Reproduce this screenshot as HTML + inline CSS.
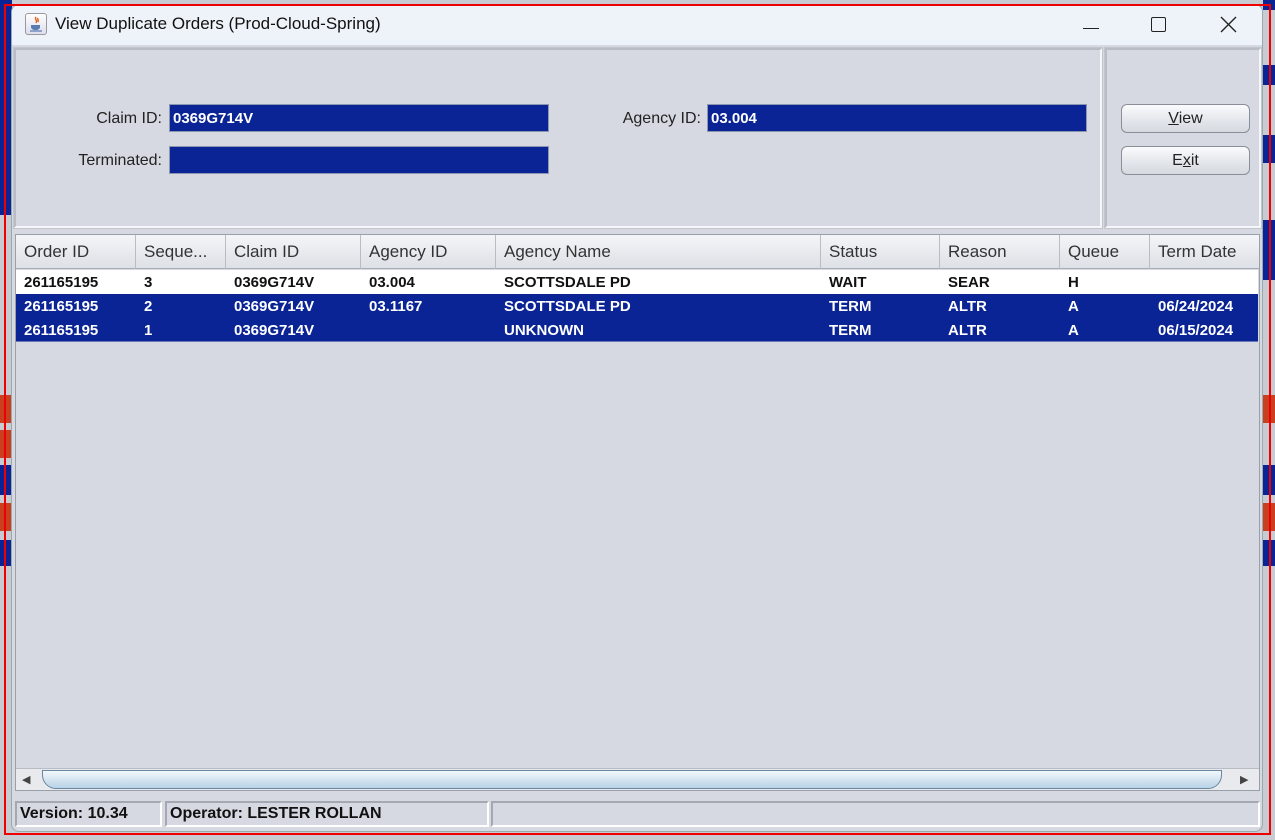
<!DOCTYPE html>
<html><head><style>
*{box-sizing:border-box;margin:0;padding:0}
body{width:1275px;height:840px;position:relative;background:#c8cbd2;font-family:"Liberation Sans",sans-serif;overflow:hidden}
.a{position:absolute}
.win{left:11px;top:4px;width:1252px;height:828px;background:#d6d9e1;border-radius:8px;overflow:hidden;border:1px solid #9aa}
.title{left:0;top:0;width:100%;height:40px;background:#eef3f9}
.panel{border:2px solid #b8bcc4;border-right-color:#f4f6fa;border-bottom-color:#f4f6fa;outline:1px solid #c2c5cc}
.lbl{font-size:16px;color:#222;text-align:right}
.fld{background:#0a2496;border:1px solid #8d96b0;color:#fff;font-weight:bold;font-size:15px;padding:5px 3px}
.btn{background:linear-gradient(#fafbfd,#e2e5ea 60%,#d6d9df);border:1px solid #8a8e96;border-radius:6px;font-size:16px;text-align:center;line-height:27px;color:#222}
.hdr{background:linear-gradient(#f4f5f8,#dde0e6);height:34px;border-bottom:1px solid #a8acb4}
.hc{position:absolute;top:0;height:34px;line-height:34px;font-size:17px;color:#333;padding-left:8px;border-right:1px solid #b8bcc4;white-space:nowrap}
.row{position:absolute;left:0;width:1242px;height:24px;font-size:15px;font-weight:bold}
.c{position:absolute;top:0;line-height:25px;padding-left:8px;white-space:nowrap}
.st{font-size:16px;font-weight:bold;color:#111;border:2px solid #a4a8b0;border-right-color:#fff;border-bottom-color:#fff;line-height:22px;padding-left:3px}
</style></head><body>
<div class="a" style="left:0;top:0;width:12px;height:215px;background:#0a2496"></div>
<div class="a" style="left:0;top:395px;width:12px;height:28px;background:#c8401f"></div>
<div class="a" style="left:0;top:430px;width:12px;height:28px;background:#c8401f"></div>
<div class="a" style="left:0;top:465px;width:12px;height:30px;background:#0a2496"></div>
<div class="a" style="left:0;top:503px;width:12px;height:28px;background:#c8401f"></div>
<div class="a" style="left:0;top:540px;width:12px;height:26px;background:#0a2496"></div>
<div class="a" style="left:1263px;top:0;width:12px;height:10px;background:#0a2496"></div>
<div class="a" style="left:1263px;top:65px;width:12px;height:20px;background:#0a2496"></div>
<div class="a" style="left:1263px;top:135px;width:12px;height:28px;background:#0a2496"></div>
<div class="a" style="left:1263px;top:220px;width:12px;height:60px;background:#0a2496"></div>
<div class="a" style="left:1263px;top:395px;width:12px;height:28px;background:#c8401f"></div>
<div class="a" style="left:1263px;top:465px;width:12px;height:30px;background:#0a2496"></div>
<div class="a" style="left:1263px;top:503px;width:12px;height:28px;background:#c8401f"></div>
<div class="a" style="left:1263px;top:540px;width:12px;height:26px;background:#0a2496"></div>

<div class="a win">
 <div class="a title">
  <div class="a" style="left:13px;top:8px;width:22px;height:22px;border:1px solid #999;border-radius:3px;background:linear-gradient(#fff,#dde);">
   <svg width="20" height="20"><path d="M10 3c-2 2 2 3 0 6M12 4c-1 1 1 2 0 4" stroke="#e8641e" stroke-width="1.5" fill="none"/><path d="M5 11h9v2c0 2-2 3-4.5 3S5 15 5 13z" fill="#5a7bb0"/><path d="M4 17h12" stroke="#5a7bb0" stroke-width="1.2"/></svg>
  </div>
  <div class="a" style="left:43px;top:9px;font-size:17px;color:#111">View Duplicate Orders (Prod-Cloud-Spring)</div>
  <div class="a" style="left:1071px;top:23px;width:16px;height:1px;background:#222"></div>
  <div class="a" style="left:1139px;top:12px;width:15px;height:15px;border:1.5px solid #222;border-radius:2px"></div>
  <svg class="a" style="left:1208px;top:11px" width="17" height="17"><path d="M1 1L16 16M16 1L1 16" stroke="#222" stroke-width="1.4"/></svg>
 </div>
 <div class="a panel" style="left:2px;top:43px;width:1088px;height:180px"></div>
 <div class="a panel" style="left:1093px;top:43px;width:156px;height:180px"></div>
 <div class="a lbl" style="left:40px;top:105px;width:110px">Claim ID:</div>
 <div class="a fld" style="left:157px;top:99px;width:380px;height:28px">0369G714V</div>
 <div class="a lbl" style="left:20px;top:147px;width:130px">Terminated:</div>
 <div class="a fld" style="left:157px;top:141px;width:380px;height:28px"></div>
 <div class="a lbl" style="left:570px;top:105px;width:119px">Agency ID:</div>
 <div class="a fld" style="left:695px;top:99px;width:380px;height:28px">03.004</div>
 <div class="a btn" style="left:1109px;top:99px;width:129px;height:29px"><u>V</u>iew</div>
 <div class="a btn" style="left:1109px;top:141px;width:129px;height:29px">E<u>x</u>it</div>

 <div class="a" style="left:3px;top:229px;width:1245px;height:557px;border:1px solid #9aa0a8;background:#d6d9e1">
  <div class="a hdr" style="left:0;top:0;width:1243px">
   <div class="hc" style="left:0;width:120px">Order ID</div>
   <div class="hc" style="left:120px;width:90px">Seque...</div>
   <div class="hc" style="left:210px;width:135px">Claim ID</div>
   <div class="hc" style="left:345px;width:135px">Agency ID</div>
   <div class="hc" style="left:480px;width:325px">Agency Name</div>
   <div class="hc" style="left:805px;width:119px">Status</div>
   <div class="hc" style="left:924px;width:120px">Reason</div>
   <div class="hc" style="left:1044px;width:90px">Queue</div>
   <div class="hc" style="left:1134px;width:110px;border-right:none">Term Date</div>
  </div>
  <div class="row" style="top:35px;background:#fff;color:#111">
   <div class="c" style="left:0">261165195</div><div class="c" style="left:120px">3</div><div class="c" style="left:210px">0369G714V</div><div class="c" style="left:345px">03.004</div><div class="c" style="left:480px">SCOTTSDALE PD</div><div class="c" style="left:805px">WAIT</div><div class="c" style="left:924px">SEAR</div><div class="c" style="left:1044px">H</div>
  </div>
  <div class="row" style="top:59px;background:#0a2496;color:#fff">
   <div class="c" style="left:0">261165195</div><div class="c" style="left:120px">2</div><div class="c" style="left:210px">0369G714V</div><div class="c" style="left:345px">03.1167</div><div class="c" style="left:480px">SCOTTSDALE PD</div><div class="c" style="left:805px">TERM</div><div class="c" style="left:924px">ALTR</div><div class="c" style="left:1044px">A</div><div class="c" style="left:1134px">06/24/2024</div>
  </div>
  <div class="row" style="top:83px;background:#0a2496;color:#fff;border-bottom:1px solid #6678b8">
   <div class="c" style="left:0">261165195</div><div class="c" style="left:120px">1</div><div class="c" style="left:210px">0369G714V</div><div class="c" style="left:480px">UNKNOWN</div><div class="c" style="left:805px">TERM</div><div class="c" style="left:924px">ALTR</div><div class="c" style="left:1044px">A</div><div class="c" style="left:1134px">06/15/2024</div>
  </div>
  <div class="a" style="left:0;top:533px;width:1243px;height:22px;background:#e8eaee;border-top:1px solid #b8bcc4">
   <div class="a" style="left:6px;top:4px;font-size:11px;color:#444">◀</div>
   <div class="a" style="left:26px;top:1px;width:1180px;height:19px;border:1px solid #6a86a0;border-radius:0 0 14px 14px;background:linear-gradient(#f2f8fc,#b8d2e6)"></div>
   <div class="a" style="left:1224px;top:4px;font-size:11px;color:#444">▶</div>
  </div>
 </div>
 <div class="a st" style="left:3px;top:796px;width:147px;height:26px">Version: 10.34</div>
 <div class="a st" style="left:153px;top:796px;width:324px;height:26px">Operator: LESTER ROLLAN</div>
 <div class="a st" style="left:479px;top:796px;width:769px;height:26px"></div>
</div>
<div class="a" style="left:4px;top:4px;width:1267px;height:831px;border:2px solid #e00"></div>
</body></html>
